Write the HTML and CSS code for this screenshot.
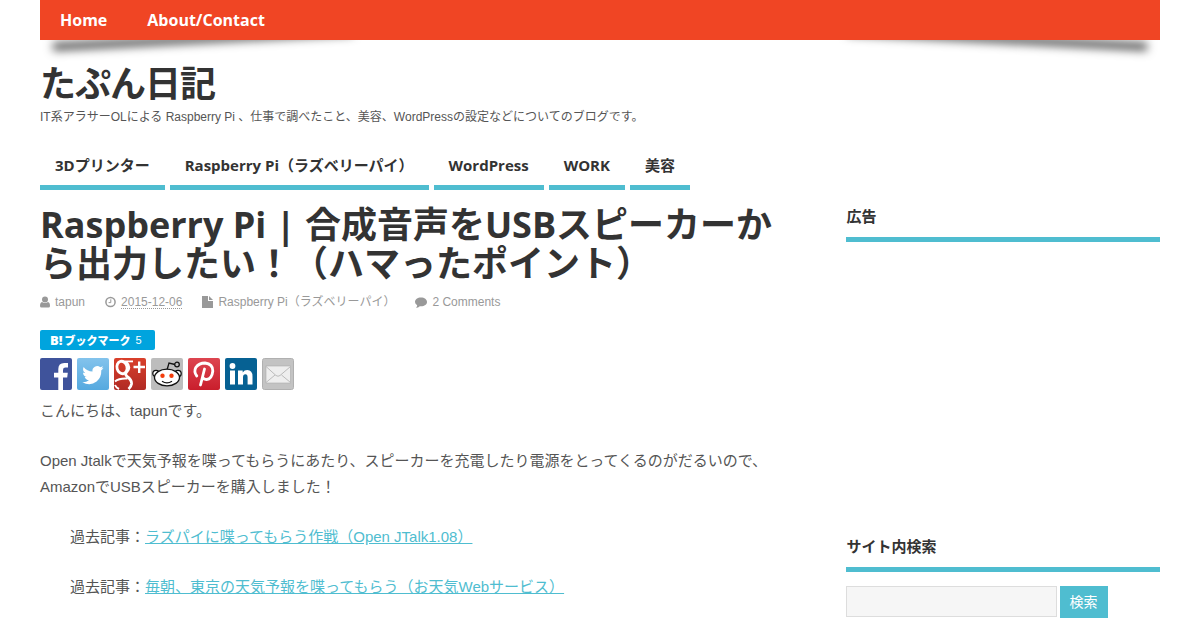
FILE: index.html
```html
<!DOCTYPE html>
<html lang="ja">
<head>
  <meta charset="UTF-8" />
  <meta name="viewport" content="width=device-width, initial-scale=1.0" />
  <title>Raspberry Pi | 合成音声をUSBスピーカーから出力したい！（ハマったポイント）</title>
  <link rel="stylesheet" href="styles.css">
</head>
<body>
<div class="container">
  <nav class="top-nav">
    <a href="#">Home</a>
    <a href="#">About/Contact</a>
  </nav>

  <header class="site-header">
    <div class="site-title">たぷん日記</div>
    <div class="site-desc">IT系アラサーOLによる Raspberry Pi 、仕事で調べたこと、美容、WordPressの設定などについてのブログです。</div>
  </header>

  <nav class="main-nav">
    <a href="#">3Dプリンター</a>
    <a href="#">Raspberry Pi（ラズベリーパイ）</a>
    <a href="#">WordPress</a>
    <a href="#">WORK</a>
    <a href="#">美容</a>
  </nav>

  <div class="wrapper">
    <main class="content">
      <h1>Raspberry Pi | 合成音声をUSBスピーカーから出力したい！（ハマったポイント）</h1>

      <div class="meta">
        <a href="#"><svg width="10" height="12" viewBox="0 0 10 12"><circle cx="5" cy="3.500" r="3"/><path d="M2 6Q5 8 8 6Q10 6.500 10 10Q10 11.500 8.500 11.500H1.500Q0 11.500 0 10Q0 6.500 2 6Z"/></svg>tapun</a>
        <span><svg width="11" height="12" viewBox="0 0 11 12"><circle cx="5.500" cy="6" r="4.600" fill="none" stroke="#999" stroke-width="1.500"/><path d="M5.800 3.300V6.600H3.600" fill="none" stroke="#999"/></svg><abbr>2015-12-06</abbr></span>
        <a href="#"><svg width="11" height="12" viewBox="0 0 11 12"><path d="M0 0H6V5H11V12H0ZM7 0L11 4H7Z"/></svg>Raspberry Pi（ラズベリーパイ）</a>
        <a href="#"><svg width="12" height="12" viewBox="0 0 12 12"><path d="M6 1.500C9.500 1.500 12 3.500 12 6S9.500 10.300 6 10.300Q5.400 10.300 4.800 10.200Q3.200 11.800 1 11.800Q2.200 10.700 2.200 9.300Q0 8 0 6C0 3.500 2.500 1.500 6 1.500Z"/></svg>2 Comments</a>
      </div>

      <a class="bookmark" href="#"><b>B!</b><strong>ブックマーク</strong><span>5</span></a>

      <div class="share">
        <a href="#" aria-label="Facebook"><svg width="32" height="32" viewBox="0 0 32 32"><rect width="32" height="32" rx="2" fill="#3f539b"/><path d="M18.300 32V19.500H14V14.700H18.300V11Q18.300 5 24.300 5H28V9.600H25.400Q23 9.600 23 12V14.700H27.800L27.200 19.500H23V32Z" fill="#fff"/></svg></a>
        <a href="#" aria-label="Twitter"><svg width="32" height="32" viewBox="0 0 32 32"><defs><linearGradient id="tw" x2="0" y2="1"><stop stop-color="#83c3ec"/><stop offset="1" stop-color="#55a9df"/></linearGradient></defs><rect width="32" height="32" rx="2" fill="url(#tw)"/><path d="M26.500 9.800Q25.500 10.300 24.300 10.400Q25.500 9.600 26 8.300Q24.800 9 23.300 9.300A4.700 4.700 0 0 0 15.500 13.600Q10 13.300 6.600 8.900Q5 12.500 8.100 15Q7 15 6 14.400Q6.200 18 9.700 19Q8.700 19.200 7.700 19Q8.700 22 12 22.200Q9 24.500 5.300 24.200Q13 28.600 19.600 23.600Q24.500 19.500 24.300 12.300Q25.600 11.300 26.500 9.800Z" fill="#fff"/></svg></a>
        <a href="#" aria-label="Google+"><svg width="32" height="32" viewBox="0 0 32 32"><defs><linearGradient id="gp" x2="0" y2="1"><stop stop-color="#d9402b"/><stop offset="1" stop-color="#b02a24"/></linearGradient></defs><rect width="32" height="32" rx="2" fill="url(#gp)"/><g fill="none" stroke="#fff"><ellipse cx="8" cy="9.500" rx="5" ry="6.300" transform="rotate(-15 8 9.500)" stroke-width="2.800"/><path d="M8 3.400H19" stroke-width="1.800"/><path d="M12 4Q17 9 13 13.500Q10.500 16 13 18.500Q18 22 17.500 26Q17 29 14.500 31" stroke-width="2.800"/><path d="M1 23.500Q5 20 13.500 20.500M1 27Q2 29.500 5 31" stroke-width="2"/><path d="M19.500 9H31M25.200 3.500V15" stroke-width="2.400"/></g></svg></a>
        <a href="#" aria-label="Reddit"><svg width="32" height="32" viewBox="0 0 32 32"><rect width="32" height="32" rx="2" fill="#bdbdbd"/><g fill="#fff" stroke="#111" stroke-width="1.300"><path d="M16 12L18 5L24 6.500" fill="none"/><circle cx="26" cy="6.500" r="2.300" fill="#bdbdbd"/><circle cx="5" cy="15.500" r="3.200"/><circle cx="27" cy="15.500" r="3.200"/><ellipse cx="16" cy="19.500" rx="12.500" ry="8.300"/><path d="M11 23.200Q16 26.500 21 23.200" fill="none"/></g><circle cx="11.500" cy="17.800" r="2.200" fill="#f33d0c"/><circle cx="20.500" cy="17.800" r="2.200" fill="#f33d0c"/></svg></a>
        <a href="#" aria-label="Pinterest"><svg width="32" height="32" viewBox="0 0 32 32"><defs><linearGradient id="pt" x2="0" y2="1"><stop stop-color="#dd4550"/><stop offset="1" stop-color="#c91e2c"/></linearGradient></defs><rect width="32" height="32" rx="2" fill="url(#pt)"/><path d="M8.800 18Q5.500 14 7.800 9.500Q11 5 17 5Q25 6 24.800 13Q24 21 18.500 21.500Q15.800 21.300 14.800 19.500M16.500 11L12.500 27" fill="none" stroke="#fff" stroke-width="2.800" stroke-linecap="round"/></svg></a>
        <a href="#" aria-label="LinkedIn"><svg width="32" height="32" viewBox="0 0 32 32"><rect width="32" height="32" rx="2" fill="#066193"/><g fill="#fff"><circle cx="7.500" cy="8" r="2.900"/><path d="M5 12.500H10V26.500H5ZM13 12.500H17.700V14.400Q19.300 12 22.300 12Q27.500 12 27.500 18.500V26.500H22.600V19.500Q22.600 16.300 20.400 16.300Q18 16.300 18 19.500V26.500H13Z"/></g></svg></a>
        <a href="#" aria-label="Email"><svg width="32" height="32" viewBox="0 0 32 32"><rect x=".5" y=".5" width="31" height="31" rx="2" fill="#c3c3c3" stroke="#b0b0b0"/><rect x="4" y="8" width="24.500" height="17" fill="#eee" stroke="#aaa" stroke-width=".6"/><path d="M4 24.500L13 17M28.500 24.500L19.500 17M4 8.500L14 17.500Q16 19 18 17.500L28.500 8.500" fill="none" stroke="#bbb"/></svg></a>
      </div>

      <div class="entry">
        <p>こんにちは、tapunです。</p>
        <p>Open Jtalkで天気予報を喋ってもらうにあたり、スピーカーを充電したり電源をとってくるのがだるいので、AmazonでUSBスピーカーを購入しました！</p>
        <p class="indent">過去記事：<a href="#">ラズパイに喋ってもらう作戦（Open JTalk1.08）</a></p>
        <p class="indent">過去記事：<a href="#">毎朝、東京の天気予報を喋ってもらう（お天気Webサービス）</a></p>
      </div>
    </main>

    <aside class="sidebar">
      <section class="widget ad">
        <h4>広告</h4>
      </section>
      <section class="widget">
        <h4>サイト内検索</h4>
        <form class="search">
          <input type="text" aria-label="サイト内検索">
          <button type="button">検索</button>
        </form>
      </section>
    </aside>
  </div>
</div>
</body>
</html>
```
FILE: styles.css
```css
* {
  box-sizing: border-box;
}
body {
  margin: 0;
  background: #fff;
  color: #555;
  font-family: "Liberation Sans", Arial, "Noto Sans CJK JP", sans-serif;
  font-size: 15px;
  line-height: 26px;
}
a {
  color: inherit;
  text-decoration: none;
}
.container {
  position: relative;
  z-index: 0;
  max-width: 1200px;
  margin: 0 auto;
  padding: 0 40px;
}
.top-nav {
  position: relative;
  display: flex;
  height: 40px;
  background: #f04524;
}
.top-nav a {
  padding: 0 20px;
  color: #fff;
  font: bold 16px/40px "Open Sans", "Noto Sans CJK JP", sans-serif;
}
/* lifted corner shadows, tucked under the bar */
.top-nav::before,
.top-nav::after {
  content: "";
  position: absolute;
  z-index: -1;
  bottom: 12px;
  left: 12px;
  width: 50%;
  height: 20%;
  max-width: 300px;
  box-shadow: 0 15px 10px #555;
  transform: rotate(-3deg);
}
.top-nav::after {
  left: auto;
  right: 12px;
  transform: rotate(3deg);
}
.site-header {
  padding: 24px 0 20px;
}
.site-title {
  color: #333;
  font: bold 36px/40px "Open Sans", "Noto Sans CJK JP", sans-serif;
  letter-spacing: -1px;
}
.site-desc {
  font-size: 12px;
  line-height: 26px;
}
.main-nav {
  display: flex;
  flex-wrap: wrap;
  gap: 5px;
  margin-bottom: 15px;
}
.main-nav a {
  padding: 5px 15px 10px;
  border-bottom: 5px solid #4fbdd0;
  color: #333;
  font: bold 15px/20px "Open Sans", "Noto Sans CJK JP", sans-serif;
}
.wrapper {
  display: flex;
  justify-content: space-between;
}
.content {
  width: 66%;
}
h1 {
  margin: 0 0 9px;
  color: #333;
  font: bold 36px/39px "Open Sans", "Noto Sans CJK JP", sans-serif;
}
.meta {
  display: flex;
  gap: 20px;
  margin-bottom: 18px;
  color: #999;
  font-size: 12px;
  line-height: 20px;
}
.meta > * {
  display: flex;
  align-items: center;
  gap: 5px;
}
.meta svg {
  fill: #999;
}
.meta abbr {
  line-height: 12px;
  border-bottom: 1px dotted #999;
}
.bookmark {
  display: flex;
  align-items: center;
  width: 115px;
  height: 20px;
  padding: 0 10px;
  border-radius: 2px;
  background: #00a4de;
  color: #fff;
  font-size: 11px;
  line-height: 20px;
}
.bookmark b {
  margin-right: 2px;
  font: 800 13px/20px "Open Sans", sans-serif;
}
.bookmark strong {
  font: 900 11px/20px "Noto Sans CJK JP", sans-serif;
}
.bookmark span {
  margin-left: 5px;
}
.share {
  display: flex;
  gap: 5px;
  margin: 8px 0;
}
.share svg {
  display: block;
}
.entry p {
  margin: 0 0 24px;
}
.entry .indent {
  padding-left: 30px;
}
.entry a {
  color: #4fbdd0;
  text-decoration: underline;
}
.sidebar {
  width: 28%;
  padding-top: 1px;
}
.widget h4 {
  margin: 0 0 14px;
  padding-bottom: 10px;
  border-bottom: 5px solid #4fbdd0;
  color: #333;
  font: bold 15px/21px "Open Sans", "Noto Sans CJK JP", sans-serif;
}
.ad {
  min-height: 330px;
}
.search {
  display: flex;
  gap: 3px;
}
.search input {
  width: 67%;
  height: 31px;
  border: 1px solid #ddd;
  background: #f6f6f6;
}
.search button {
  height: 32px;
  padding: 0 10px;
  border: 0;
  background: #4fbdd0;
  color: #fff;
  font: 14px/32px "Liberation Sans", "Noto Sans CJK JP", sans-serif;
}
```
